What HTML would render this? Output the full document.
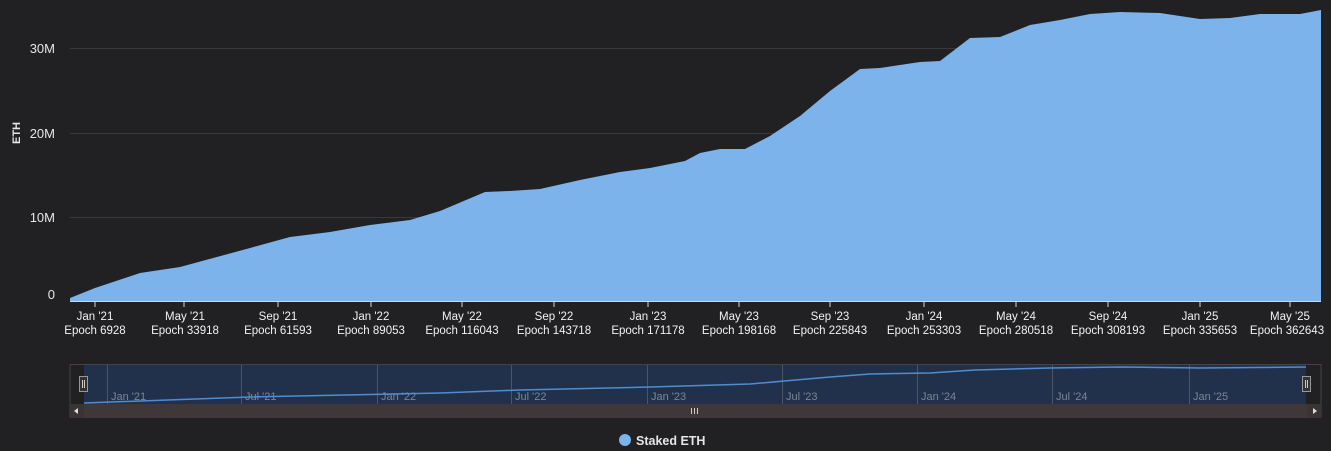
<!DOCTYPE html>
<html><head><style>
html,body{margin:0;padding:0;background:#212023;width:1331px;height:451px;overflow:hidden;font-family:"Liberation Sans",sans-serif}
</style></head><body>
<svg width="1331" height="451" xmlns="http://www.w3.org/2000/svg" font-family="Liberation Sans, sans-serif">
<rect width="1331" height="451" fill="#212023"/>
<g stroke="#3a393d" stroke-width="1">
<line x1="70" x2="1321" y1="48.5" y2="48.5"/><line x1="70" x2="1321" y1="133.5" y2="133.5"/><line x1="70" x2="1321" y1="217.5" y2="217.5"/>
</g>
<path fill="#7bb3ea" d="M70,301 L70,298 L95,288 L140,273 L180,267 L250,248 L290,237 L330,232 L370,225 L410,220 L440,211 L485,192 L510,191 L540,189 L580,180 L620,172 L650,168 L685,161 L700,153 L720,149 L745,149 L770,136 L800,116 L830,91 L860,69 L880,68 L920,62 L940,61 L970,38 L1000,37 L1030,25 L1060,20 L1090,14 L1120,12 L1160,13 L1200,19 L1230,18 L1260,14 L1300,14 L1321,10 L1321,301 Z"/>
<line x1="70" x2="1321" y1="301.5" y2="301.5" stroke="#c8d8ec"/>
<g fill="#e6e6e6" font-size="13" text-anchor="end">
<text x="55" y="53">30M</text><text x="55" y="138">20M</text><text x="55" y="222">10M</text><text x="55" y="299">0</text>
</g>
<text transform="translate(20,133) rotate(-90)" fill="#e6e6e6" font-size="11" text-anchor="middle" font-weight="bold">ETH</text>
<g stroke="#c8d8ec">
<line x1="95" x2="95" y1="301" y2="307"/><line x1="184" x2="184" y1="301" y2="307"/><line x1="278" x2="278" y1="301" y2="307"/><line x1="371" x2="371" y1="301" y2="307"/><line x1="462" x2="462" y1="301" y2="307"/><line x1="554" x2="554" y1="301" y2="307"/><line x1="648" x2="648" y1="301" y2="307"/><line x1="739" x2="739" y1="301" y2="307"/><line x1="830" x2="830" y1="301" y2="307"/><line x1="924" x2="924" y1="301" y2="307"/><line x1="1016" x2="1016" y1="301" y2="307"/><line x1="1108" x2="1108" y1="301" y2="307"/><line x1="1200" x2="1200" y1="301" y2="307"/><line x1="1290" x2="1290" y1="301" y2="307"/>
</g>
<g fill="#f2f2f2" font-size="11.5" text-anchor="middle">
<text x="95" y="320">Jan '21</text><text x="95" y="334">Epoch 6928</text>
<text x="185" y="320">May '21</text><text x="185" y="334">Epoch 33918</text>
<text x="278" y="320">Sep '21</text><text x="278" y="334">Epoch 61593</text>
<text x="371" y="320">Jan '22</text><text x="371" y="334">Epoch 89053</text>
<text x="462" y="320">May '22</text><text x="462" y="334">Epoch 116043</text>
<text x="554" y="320">Sep '22</text><text x="554" y="334">Epoch 143718</text>
<text x="648" y="320">Jan '23</text><text x="648" y="334">Epoch 171178</text>
<text x="739" y="320">May '23</text><text x="739" y="334">Epoch 198168</text>
<text x="830" y="320">Sep '23</text><text x="830" y="334">Epoch 225843</text>
<text x="924" y="320">Jan '24</text><text x="924" y="334">Epoch 253303</text>
<text x="1016" y="320">May '24</text><text x="1016" y="334">Epoch 280518</text>
<text x="1108" y="320">Sep '24</text><text x="1108" y="334">Epoch 308193</text>
<text x="1200" y="320">Jan '25</text><text x="1200" y="334">Epoch 335653</text>
<text x="1290" y="320">May '25</text><text x="1287" y="334">Epoch 362643</text>
</g>
<!-- navigator -->
<rect x="70" y="364.5" width="1251" height="53" fill="none" stroke="#4a4045"/>
<rect x="84" y="365" width="1222" height="39" fill="#22314b"/>
<g stroke="#4b5568">
<line x1="107.5" x2="107.5" y1="365" y2="404"/><line x1="241.5" x2="241.5" y1="365" y2="404"/><line x1="377.5" x2="377.5" y1="365" y2="404"/><line x1="511.5" x2="511.5" y1="365" y2="404"/><line x1="647.5" x2="647.5" y1="365" y2="404"/><line x1="782.5" x2="782.5" y1="365" y2="404"/><line x1="917.5" x2="917.5" y1="365" y2="404"/><line x1="1052.5" x2="1052.5" y1="365" y2="404"/><line x1="1189.5" x2="1189.5" y1="365" y2="404"/>
</g>
<g fill="#7b8596" font-size="11">
<text x="111" y="400">Jan '21</text><text x="245" y="400">Jul '21</text><text x="381" y="400">Jan '22</text><text x="515" y="400">Jul '22</text><text x="651" y="400">Jan '23</text><text x="786" y="400">Jul '23</text><text x="921" y="400">Jan '24</text><text x="1056" y="400">Jul '24</text><text x="1193" y="400">Jan '25</text>
</g>
<path fill="none" stroke="#4f8dd0" stroke-width="1.5" d="M84,403 L250,397 L440,393 L520,390 L650,387 L750,384 L830,377 L870,374 L930,373 L975,370 L1050,368 L1120,367 L1200,368 L1306,367"/>
<rect x="70" y="404" width="1251" height="14" fill="#403838"/>
<rect x="70" y="404" width="14" height="14" fill="#3a3434"/><rect x="1307" y="404" width="14" height="14" fill="#3a3434"/>
<path d="M74,411 L78,408 L78,414 Z" fill="#ddd"/><path d="M1317,411 L1313,408 L1313,414 Z" fill="#ddd"/>
<g stroke="#ccc" stroke-width="1"><line x1="691.5" x2="691.5" y1="408" y2="414"/><line x1="694.5" x2="694.5" y1="408" y2="414"/><line x1="697.5" x2="697.5" y1="408" y2="414"/></g>
<rect x="79.5" y="376.5" width="8" height="15" fill="#333" stroke="#999"/>
<rect x="1302.5" y="376.5" width="8" height="15" fill="#333" stroke="#999"/>
<g stroke="#ccc"><line x1="82.5" x2="82.5" y1="380" y2="388"/><line x1="84.5" x2="84.5" y1="380" y2="388"/><line x1="1305.5" x2="1305.5" y1="380" y2="388"/><line x1="1307.5" x2="1307.5" y1="380" y2="388"/></g>
<!-- legend -->
<circle cx="625" cy="440" r="6" fill="#7bb3ea"/>
<text x="636" y="445" fill="#e6e6e6" font-size="12.5" font-weight="bold">Staked ETH</text>
</svg>
</body></html>
